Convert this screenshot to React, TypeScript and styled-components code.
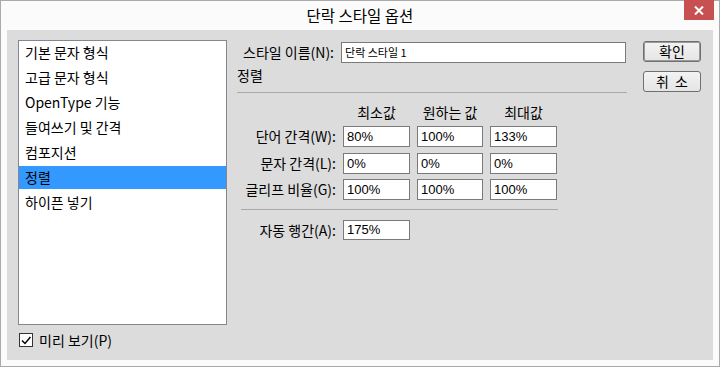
import React from "react";
import styled, { createGlobalStyle } from "styled-components";

const GlobalStyle = createGlobalStyle`
  html, body { margin: 0; padding: 0; }
  body {
    font-family: "Noto Sans CJK KR", "Liberation Sans", sans-serif;
    font-size: 14px;
    color: #000;
    background: #fff;
  }
  * { box-sizing: border-box; }
`;

const Window = styled.div`
  width: 720px;
  height: 367px;
  border: 1px solid #aaaaaa;
  background: #fbfbfb;
  display: flex;
  flex-direction: column;
`;

const TitleBar = styled.div`
  height: 29px;
  flex-shrink: 0;
  display: grid;
  grid-template-columns: 1fr auto 1fr;
  align-items: start;
`;

const Title = styled.div`
  grid-column: 2;
  font-size: 15.5px;
  line-height: 29px;
`;

const CloseButton = styled.button`
  grid-column: 3;
  justify-self: end;
  margin: -1px 5px 0 0;
  width: 30px;
  height: 20px;
  padding: 0;
  border: none;
  background: #c75050;
  display: flex;
  align-items: center;
  justify-content: center;
`;

const Content = styled.div`
  flex: 1;
  margin: 0 6px 6px;
  background: #dcdcdc;
  display: flex;
`;

const Sidebar = styled.div`
  width: 220px;
  padding: 10px 0 0 11px;
  display: flex;
  flex-direction: column;
  gap: 8px;
`;

const List = styled.ul`
  margin: 0;
  padding: 0;
  list-style: none;
  width: 209px;
  height: 285px;
  background: #fff;
  border: 1px solid #828790;
`;

const ListItem = styled.li<{ $selected?: boolean }>`
  height: 25px;
  padding: 0 0 2px 6px;
  line-height: 22px;
  white-space: nowrap;
  background: ${(p) =>
    p.$selected ? "linear-gradient(#3399ff, #3399ff) top / 100% 23px no-repeat" : "transparent"};
`;

const CheckRow = styled.label`
  display: flex;
  align-items: center;
  gap: 6px;
  padding-left: 1px;
  height: 14px;
  line-height: 14px;
`;

const CheckBox = styled.span`
  width: 14px;
  height: 14px;
  border: 1px solid #333;
  background: #fff;
  display: flex;
  align-items: center;
  justify-content: center;
`;

const Form = styled.div`
  width: 390px;
  margin-left: 10px;
  padding-top: 12px;
  display: flex;
  flex-direction: column;
`;

const NameRow = styled.div`
  display: flex;
  align-items: center;
  gap: 7px;
  padding-left: 6px;
  margin-right: 1px;
`;

const Label = styled.span<{ $align?: "left" | "right" }>`
  white-space: nowrap;
  line-height: 21px;
  text-align: ${(p) => p.$align ?? "left"};
`;

const TextField = styled.div<{ $small?: boolean; $h?: number }>`
  height: ${(p) => p.$h ?? 21}px;
  flex: 1;
  border: 1px solid #7a7a7a;
  background: #fff;
  padding: 0 3px;
  font-family: ${(p) =>
    p.$small ? '"Noto Sans CJK KR", sans-serif' : '"Liberation Sans", sans-serif'};
  font-size: ${(p) => (p.$small ? 11 : 13)}px;
  line-height: ${(p) => (p.$h ?? 21) - 2}px;
  white-space: nowrap;
  overflow: hidden;
`;

const SectionLabel = styled.div`
  margin-top: 4px;
  line-height: 17px;
`;

const Separator = styled.div<{ $width?: number; $offset?: number; $top: number }>`
  height: 1px;
  background: #a9a9a9;
  margin-top: ${(p) => p.$top}px;
  margin-left: ${(p) => p.$offset ?? 0}px;
  width: ${(p) => (p.$width ? `${p.$width}px` : "100%")};
`;

const Grid = styled.div<{ $top: number }>`
  display: grid;
  grid-template-columns: 99px 67px 66px 67px;
  column-gap: 7px;
  row-gap: 5.5px;
  margin-top: ${(p) => p.$top}px;
`;

const Header = styled.div`
  line-height: 16.5px;
  text-align: center;
  white-space: nowrap;
`;

const ButtonCol = styled.div`
  margin-left: 16px;
  padding-top: 11px;
  width: 58px;
  display: flex;
  flex-direction: column;
  gap: 9px;
`;

const Button = styled.button<{ $default?: boolean; $spaced?: boolean }>`
  height: 21px;
  padding: 0 0 0 ${(p) => (p.$spaced ? 6 : 0)}px;
  border: 1px solid #707070;
  border-radius: 3px;
  background: linear-gradient(#f3f3f3, #e5e5e5);
  font-family: "Noto Sans CJK KR", sans-serif;
  font-size: 14px;
  line-height: 19px;
  color: #000;
  letter-spacing: ${(p) => (p.$spaced ? 6 : 0)}px;
  box-shadow: ${(p) => (p.$default ? "inset 0 0 0 1px #9a9a9a" : "none")};
`;

const listItems = ["기본 문자 형식", "고급 문자 형식", "OpenType 기능", "들여쓰기 및 간격", "컴포지션", "정렬", "하이픈 넣기"];

const rows = [
  { label: "단어 간격(W):", values: ["80%", "100%", "133%"] },
  { label: "문자 간격(L):", values: ["0%", "0%", "0%"] },
  { label: "글리프 비율(G):", values: ["100%", "100%", "100%"] },
];

export default function App() {
  return (
    <>
      <GlobalStyle />
      <Window>
        <TitleBar>
          <Title>단락 스타일 옵션</Title>
          <CloseButton aria-label="닫기">
            <svg width="10" height="9" viewBox="0 0 10 9">
              <path d="M1 0.5 L9 8.5 M9 0.5 L1 8.5" stroke="#fff" strokeWidth="2" />
            </svg>
          </CloseButton>
        </TitleBar>
        <Content>
          <Sidebar>
            <List>
              {listItems.map((t) => (
                <ListItem key={t} $selected={t === "정렬"}>
                  {t}
                </ListItem>
              ))}
            </List>
            <CheckRow>
              <CheckBox>
                <svg width="10" height="9" viewBox="0 0 10 9">
                  <path d="M1 4.5 L4 7.5 L9.5 1" stroke="#000" strokeWidth="1.5" fill="none" />
                </svg>
              </CheckBox>
              미리 보기(P)
            </CheckRow>
          </Sidebar>
          <Form>
            <NameRow>
              <Label>스타일 이름(N):</Label>
              <TextField $small>단락 스타일 1</TextField>
            </NameRow>
            <SectionLabel>정렬</SectionLabel>
            <Separator $top={8} />
            <Grid $top={11}>
              <span />
              <Header>최소값</Header>
              <Header>원하는 값</Header>
              <Header>최대값</Header>
              {rows.map((r) => (
                <React.Fragment key={r.label}>
                  <Label $align="right">{r.label}</Label>
                  {r.values.map((v, i) => (
                    <TextField key={i}>{v}</TextField>
                  ))}
                </React.Fragment>
              ))}
            </Grid>
            <Separator $top={9} $offset={4} $width={317} />
            <Grid $top={10}>
              <Label $align="right">자동 행간(A):</Label>
              <TextField $h={20}>175%</TextField>
            </Grid>
          </Form>
          <ButtonCol>
            <Button $default>확인</Button>
            <Button $spaced>취소</Button>
          </ButtonCol>
        </Content>
      </Window>
    </>
  );
}
